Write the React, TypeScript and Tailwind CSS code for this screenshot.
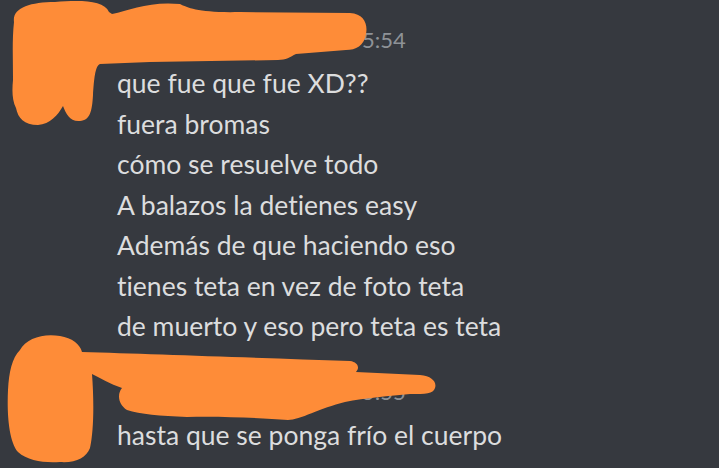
import React from "react";

const groups = [
  {
    time: "5:54",
    lines: [
      "que fue que fue XD??",
      "fuera bromas",
      "cómo se resuelve todo",
      "A balazos la detienes easy",
      "Además de que haciendo eso",
      "tienes teta en vez de foto teta",
      "de muerto y eso pero teta es teta",
    ],
  },
  {
    time: "5:55",
    lines: ["hasta que se ponga frío el cuerpo"],
  },
];

function Scribbles() {
  return (
    <svg
      className="pointer-events-none absolute inset-0"
      width="719"
      height="468"
      viewBox="0 0 719 468"
    >
      <g fill="#fe8c38">
        {/* first redaction: blob + bar */}
        <path d="M14 22 C12 8 30 2 55 2 C80 0 104 0 109 12 L112 14 C130 10 150 1 180 4 C188 8 200 13 240 12 L350 13 C364 14 368 24 366 34 C364 46 356 50 346 50 L296 54 C290 57 286 60 278 60 L150 62 L100 64 C95 66 94 80 93 95 C92 112 90 120 80 121 C70 122 66 114 63 106 C58 115 50 124 38 125 C24 125 18 118 16 108 C12 100 12 90 13 80 C13 60 12 40 14 22 Z" />
        {/* second redaction: blob + handle + bar */}
        <path d="M20 350 C26 338 44 333 60 336 C72 338 80 344 82 352 C150 354 260 358 350 361 C358 362 360 368 356 372 L420 375 C432 376 437 382 435 388 C433 394 426 394 410 394 C390 396 365 398 345 402 C320 408 300 420 288 420 C260 418 220 416 187 417 C160 416 140 414 127 410 C118 404 117 394 122 388 C110 384 100 378 92 374 C94 400 94 430 90 448 C86 458 76 463 60 462 C44 463 28 461 18 452 C8 440 7 410 8 390 C9 372 12 358 20 350 Z" />
      </g>
    </svg>
  );
}

export default function App() {
  return (
    <div
      className="relative h-[468px] w-[719px] overflow-hidden bg-[#36393f] [font-variant-ligatures:none]"
      style={{ fontFamily: "Lato, 'Noto Sans', sans-serif" }}
    >
      <div className="flex flex-col pl-[117px] pt-[25px]">
        {groups.map((g, i) => (
          <div key={i} className={i === 0 ? "flex flex-col" : "mt-[30px] flex flex-col"}>
            <div className="flex h-[30px] items-baseline text-[22px] leading-[30px]">
              <span className="w-[245px]" />
              <span className="text-[#8e9297]">{g.time}</span>
            </div>
            <div className="mt-[8px] flex flex-col">
              {g.lines.map((l, j) => (
                <div key={j} className="text-[26.5px] leading-[40.5px] text-[#dcddde]">
                  {l}
                </div>
              ))}
            </div>
          </div>
        ))}
      </div>
      <Scribbles />
    </div>
  );
}
